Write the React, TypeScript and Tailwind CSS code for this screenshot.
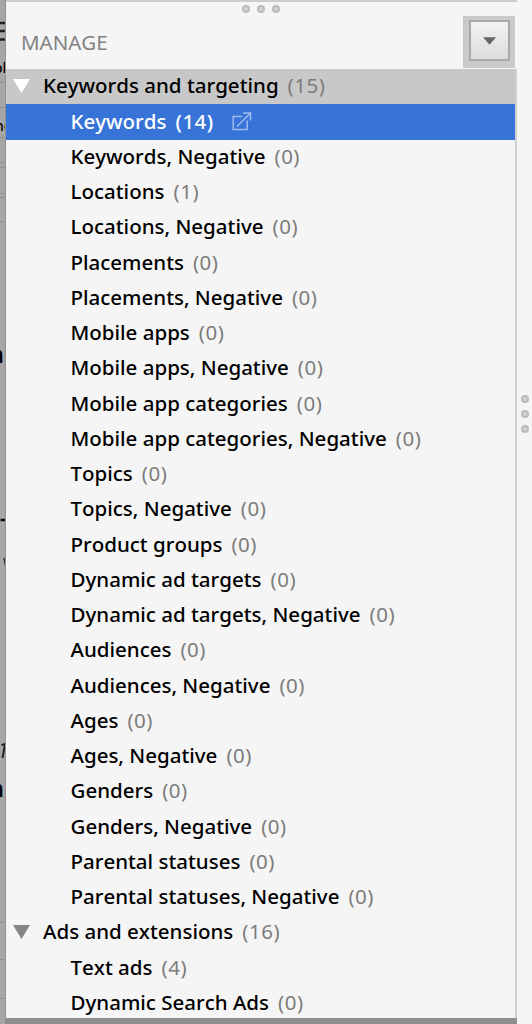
type Item = { label: string; count: number; selected?: boolean };

const targeting: Item[] = [
  { label: "Keywords", count: 14, selected: true },
  { label: "Keywords, Negative", count: 0 },
  { label: "Locations", count: 1 },
  { label: "Locations, Negative", count: 0 },
  { label: "Placements", count: 0 },
  { label: "Placements, Negative", count: 0 },
  { label: "Mobile apps", count: 0 },
  { label: "Mobile apps, Negative", count: 0 },
  { label: "Mobile app categories", count: 0 },
  { label: "Mobile app categories, Negative", count: 0 },
  { label: "Topics", count: 0 },
  { label: "Topics, Negative", count: 0 },
  { label: "Product groups", count: 0 },
  { label: "Dynamic ad targets", count: 0 },
  { label: "Dynamic ad targets, Negative", count: 0 },
  { label: "Audiences", count: 0 },
  { label: "Audiences, Negative", count: 0 },
  { label: "Ages", count: 0 },
  { label: "Ages, Negative", count: 0 },
  { label: "Genders", count: 0 },
  { label: "Genders, Negative", count: 0 },
  { label: "Parental statuses", count: 0 },
  { label: "Parental statuses, Negative", count: 0 },
];

const ads: Item[] = [
  { label: "Text ads", count: 4 },
  { label: "Dynamic Search Ads", count: 0 },
];

function Dot() {
  return (
    <span className="flex size-2 items-center justify-center rounded-full bg-[#bababa]">
      <span className="size-1 rounded-full bg-[#d2d2d2]" />
    </span>
  );
}

function ExternalIcon() {
  return (
    <svg className="ml-[18px] size-5" viewBox="0 0 20 20" fill="none" stroke="#9dbbec" strokeWidth="1.5">
      <path d="M10 5.500H1.200v13h14V9.500" />
      <path d="M5 15.500L18 2.500M11 2h7.500v7.500" />
    </svg>
  );
}

function GroupRow({ label, count, active }: { label: string; count: number; active?: boolean }) {
  return (
    <div
      className={`flex h-[35.25px] items-center pb-[2px] pl-[7px] ${active ? "-mr-[2px] bg-[#c8c8c8]" : ""}`}
    >
      <svg className="h-[14px] w-[17px]" viewBox="0 0 17 14">
        <path d="M0 0h17L8.500 14z" fill={active ? "#fff" : "#858585"} />
      </svg>
      <span className="ml-[13px]">{label}</span>
      <span className="ml-[9px] font-normal tracking-[0.5px] text-[#7c7c7c]">({count})</span>
    </div>
  );
}

function ItemRow({ item }: { item: Item }) {
  return (
    <div
      className={`flex h-[35.25px] items-center pb-[2px] pl-[64.5px] ${
        item.selected ? "bg-[#3874d8] text-white" : ""
      }`}
    >
      <span>{item.label}</span>
      <span
        className={
          item.selected
            ? "ml-[9px] tracking-[0.5px]"
            : "ml-[9px] font-normal tracking-[0.5px] text-[#7c7c7c]"
        }
      >
        ({item.count})
      </span>
      {item.selected ? <ExternalIcon /> : null}
    </div>
  );
}

// Dimmed slice of the window behind the panel.
function Backdrop() {
  return (
    <div className="h-full w-[6px] shrink-0 overflow-hidden bg-[#a6a6a6]">
      <svg className="h-[1024px] w-[6px]" viewBox="0 0 6 1024">
        <path
          d="M0 82.500h6M0 107.500h6M0 137.500h6M0 162.500h6M0 167.500h6M0 193.500h6M0 197.500h6M0 221.500h6M0 922.500h6M0 959.500h6M0 998.500h6"
          stroke="#8f8f8f"
        />
        <path d="M0 23h6M0 31h6M0 39.500h6" stroke="#222" strokeWidth="2.5" />
        <text x="-6" y="73" fontSize="14">ol</text>
        <text x="-5" y="131" fontSize="14">ne</text>
        <text x="-11" y="363" fontSize="24">n</text>
        <path d="M0.500 520h5" stroke="#111" strokeWidth="2.5" />
        <path d="M4 558l2 10" stroke="#333" strokeWidth="1.5" />
        <path d="M1.500 745l3.500-1-2.500 14" stroke="#222" strokeWidth="2" fill="none" />
        <text x="-11" y="797" fontSize="24">n</text>
        <path d="M5.500 0v1024" stroke="#929292" />
      </svg>
    </div>
  );
}

export default function App() {
  return (
    <div className="flex h-[1024px] w-[532px] overflow-hidden bg-[#f5f5f5] font-['Noto_Sans',sans-serif] text-[20.5px] font-medium whitespace-nowrap text-black [font-kerning:none]">
      <Backdrop />
      <div className="flex h-full w-[511px] flex-col">
        <div className="h-[2px] bg-[#cdcdcd]" />
        <div className="flex h-[14px] items-center justify-center gap-[7px] pr-px">
          <Dot />
          <Dot />
          <Dot />
        </div>
        <div className="flex h-[53px] items-start justify-between pl-[15px]">
          <span className="mt-[11px] font-normal text-[#828282]">MANAGE</span>
          <div className="mr-[2px] flex h-[52px] w-[52px] items-center justify-center bg-[#cacaca] pb-1">
            <button className="flex size-[41px] items-center justify-center border-2 border-[#a8a8a8] bg-linear-to-b from-[#f2f2f2] to-[#dcdcdc]">
              <svg className="mt-0.5 h-2 w-[13px]" viewBox="0 0 14 8">
                <path d="M0 0h14L7 8z" fill="#666" />
              </svg>
            </button>
          </div>
        </div>
        <div className="h-[949px] overflow-hidden border-r-2 border-[#d0d0d0]">
          <GroupRow label="Keywords and targeting" count={15} active />
          {targeting.map((item) => (
            <ItemRow key={item.label} item={item} />
          ))}
          <GroupRow label="Ads and extensions" count={16} />
          {ads.map((item) => (
            <ItemRow key={item.label} item={item} />
          ))}
        </div>
        <div className="h-[6px] bg-[#8f8f8f]" />
      </div>
      <div className="flex flex-1 flex-col items-center pt-[395px]">
        <div className="flex flex-col gap-[7px]">
          <Dot />
          <Dot />
          <Dot />
        </div>
      </div>
    </div>
  );
}
